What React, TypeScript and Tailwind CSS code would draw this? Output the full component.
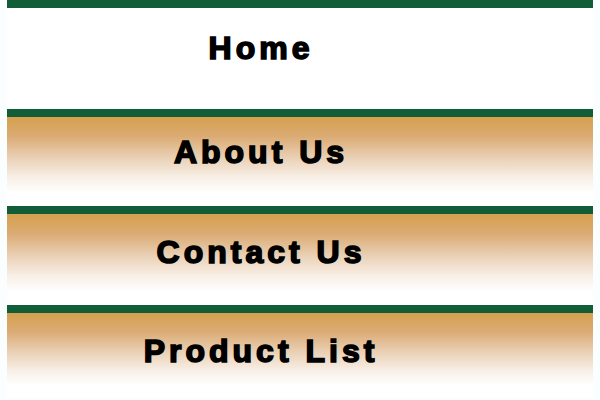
import React from "react";

const items = [
  { label: "Home", h: "h-[100px]", pt: "pt-[24px]", plain: true },
  { label: "About Us", h: "h-[89px]", pt: "pt-[19px]", plain: false },
  { label: "Contact Us", h: "h-[91px]", pt: "pt-[22px]", plain: false },
  { label: "Product List", h: "h-[85px]", pt: "pt-[22px]", plain: false },
];

export default function App() {
  return (
    <div className="w-[600px] h-[400px] overflow-hidden bg-[#fbfefe] px-[7px] flex flex-col" style={{ fontFamily: '"Liberation Sans", Arial, sans-serif' }}>
      {items.map((it, i) => (
        <div key={it.label} className={i === 1 ? "mt-[1px]" : ""}>
          <div className="h-[8px] bg-[#115d37]" />
          <div
            className={`${it.h} ${it.pt} flex justify-center pr-[78px] ${
              it.plain
                ? "bg-white"
                : "bg-[linear-gradient(to_bottom,#d6a04e_0%,#dbab74_22%,#e9cfb3_45%,#f8efe6_68%,#ffffff_85%)]"
            }`}
          >
            <span className="text-[32px] leading-[32px] font-bold tracking-[4px] text-black [-webkit-text-stroke:1.6px_black]">
              {it.label}
            </span>
          </div>
        </div>
      ))}
    </div>
  );
}
